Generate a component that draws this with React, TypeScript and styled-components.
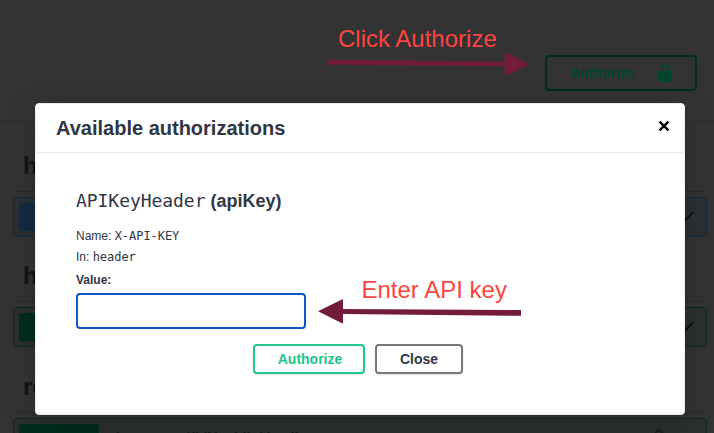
import React from "react";
import styled, { createGlobalStyle } from "styled-components";

const GlobalStyle = createGlobalStyle`
  *, *::before, *::after { box-sizing: border-box; }
  html, body { margin: 0; height: 100%; overflow: hidden; background: #333; }
  body { font-family: "Liberation Sans", Arial, sans-serif; color: #303645; }
  h1, h2, h3, h4, p { margin: 0; }
`;

const Page = styled.div`
  position: relative;
  width: 714px;
  height: 433px;
  overflow: hidden;
  background: #333;
`;

const SchemeBar = styled.header`
  height: 122px;
  padding: 55px 17px 0 0;
  display: flex;
  justify-content: flex-end;
  align-items: flex-start;
  border-bottom: 1px solid #2c2c2c;
`;

const AuthorizeTrigger = styled.button`
  width: 152px;
  height: 36px;
  padding: 0 20px 1px 23px;
  display: flex;
  align-items: center;
  justify-content: space-between;
  border: 2px solid #002f1f;
  border-radius: 4px;
  background: transparent;
  color: #00452d;
  font: bold 14px/1 "Liberation Sans", Arial, sans-serif;
`;

const Sections = styled.main`
  display: flex;
  flex-direction: column;
  padding: 19px 7px 0 13px;
`;

const Section = styled.section`
  height: 110px;
  flex: none;

  &:last-child {
    margin-top: 1px;
  }
`;

const TagTitle = styled.h3`
  height: 51px;
  padding: 11px 0 0 10px;
  border-bottom: 1px solid #292a2c;
  color: #11141b;
  font-size: 24px;
  line-height: 27px;
`;

const Operation = styled.div<{ $border: string; $bg: string }>`
  height: 40px;
  margin-top: 5px;
  padding: 0 10px 0 5px;
  display: flex;
  align-items: center;
  border: 1px solid ${(p) => p.$border};
  border-radius: 4px;
  background: ${(p) => p.$bg};
  color: #171a20;
`;

const Method = styled.span<{ $bg: string }>`
  width: 80px;
  height: 28px;
  border-radius: 3px;
  background: ${(p) => p.$bg};
  color: #27352f;
  font-size: 14px;
  font-weight: bold;
  line-height: 28px;
  text-align: center;
`;

const Path = styled.span`
  flex: 1;
  padding-left: 16px;
  color: #151719;
  font: bold 14px/20px "Liberation Sans", Arial, sans-serif;
`;

const RowIcons = styled.span`
  display: flex;
  align-items: center;
  gap: 9px;
`;

const Overlay = styled.div`
  position: absolute;
  inset: 0;
  padding: 103px 29px 18px 35px;
`;

const Dialog = styled.div`
  height: 312px;
  border-radius: 4px;
  background: #fff;
  border: 1px solid #ebebeb;
  box-shadow: 0 10px 30px rgba(0, 0, 0, 0.2);
`;

const DialogHeader = styled.div`
  height: 49px;
  padding: 0 14px 0 20px;
  display: flex;
  align-items: center;
  justify-content: space-between;
  border-bottom: 1px solid #ebebeb;
`;

const DialogTitle = styled.h2`
  font-size: 20px;
  line-height: 24px;
`;

const CloseIcon = styled.svg`
  margin-bottom: 4px;
`;

const DialogBody = styled.form`
  padding: 35px 40px 0;
  display: flex;
  flex-direction: column;
`;

const KeyTitle = styled.h4`
  height: 26px;
  font-size: 18px;
  line-height: 26px;
  white-space: pre;
`;

const Code = styled.code<{ $size: number }>`
  font-family: "DejaVu Sans Mono", monospace;
  font-size: ${(p) => p.$size}px;
  font-weight: 400;
  letter-spacing: -0.05px;
`;

const Detail = styled.p`
  height: 21px;
  font-size: 12px;
  line-height: 21px;
  white-space: pre;
`;

const Details = styled.div`
  padding-top: 12px;
`;

const ValueLabel = styled.label`
  margin-top: 2px;
  font-size: 12px;
  font-weight: bold;
  line-height: 20px;
`;

const ValueInput = styled.input`
  width: 230px;
  height: 36px;
  margin-top: 3px;
  padding: 0 10px;
  border: 2px solid #0b58bf;
  border-radius: 4px;
  background: #fff;
  outline: none;
`;

const Actions = styled.div`
  display: flex;
  gap: 10px;
  margin: 15px 0 0 177px;
`;

const ActionButton = styled.button<{ $width: number; $line: string; $ink: string; $nudge: number }>`
  width: ${(p) => p.$width}px;
  height: 30px;
  padding: 0 0 0 ${(p) => p.$nudge}px;
  border: 2px solid ${(p) => p.$line};
  border-radius: 4px;
  background: #fff;
  box-shadow: 0 1px 2px rgba(0, 0, 0, 0.12);
  color: ${(p) => p.$ink};
  font: bold 14px/1 "Liberation Sans", Arial, sans-serif;
`;

const Arrows = styled.svg`
  position: absolute;
  inset: 0;
`;

const Note = styled.span<{ $x: number; $y: number }>`
  position: absolute;
  left: ${(p) => p.$x}px;
  top: ${(p) => p.$y}px;
  color: #ff4341;
  font-size: 24px;
  line-height: 28px;
  white-space: nowrap;
`;

const UnlockIcon = ({ size, color }: { size: number; color: string }) => (
  <svg width={size} height={size} viewBox="0 0 20 20" fill={color}>
    <path d="M15.8 8H14V5.6C14 2.703 12.665 1 10 1 7.334 1 6 2.703 6 5.6V6h2v-.801C8 3.754 8.797 3 10 3c1.203 0 2 .754 2 2.199V8H4c-.553 0-1 .646-1 1.199V17c0 .549.428 1.139.951 1.307l1.197.387C5.672 18.861 6.55 19 7.1 19h5.8c.549 0 1.428-.139 1.951-.307l1.196-.387c.524-.167.953-.757.953-1.306V9.199C17 8.646 16.352 8 15.8 8z" />
  </svg>
);

const Check = () => (
  <svg width="18" height="14" viewBox="0 0 18 14" fill="none" stroke="#080909" strokeWidth="1.7">
    <path d="M0 3 7.500 10 15 2.500" />
  </svg>
);

const operations = [
  { tag: "h", method: "GET", path: "", line: "#142b43", row: "#2b3034", badge: "#142b43" },
  { tag: "h", method: "POST", path: "", line: "#002d1f", row: "#2b302f", badge: "#002d20" },
  { tag: "re", method: "POST", path: "/resources/{id}/public/details", line: "#002d1f", row: "#2b302f", badge: "#002d20" },
];

export default function App() {
  return (
    <Page>
      <GlobalStyle />
      <SchemeBar>
        <AuthorizeTrigger>
          Authorize
          <UnlockIcon size={20} color="#00452d" />
        </AuthorizeTrigger>
      </SchemeBar>
      <Sections>
        {operations.map((op, i) => (
          <Section key={i}>
            <TagTitle>{op.tag}</TagTitle>
            <Operation $border={op.line} $bg={op.row}>
              <Method $bg={op.badge}>{op.method}</Method>
              <Path>{op.path}</Path>
              <RowIcons>
                {i === 2 && <UnlockIcon size={20} color="#1b1e1d" />}
                <Check />
              </RowIcons>
            </Operation>
          </Section>
        ))}
      </Sections>

      <Overlay>
        <Dialog role="dialog">
          <DialogHeader>
            <DialogTitle>Available authorizations</DialogTitle>
            <CloseIcon width="12" height="12" viewBox="0 0 12 12" stroke="#000" strokeWidth="2.5" fill="none">
              <path d="M1.6 1.6 10.4 10.4M10.4 1.6 1.6 10.4" />
            </CloseIcon>
          </DialogHeader>
          <DialogBody>
            <KeyTitle>
              <Code $size={18}>APIKeyHeader</Code> (apiKey)
            </KeyTitle>
            <Details>
              <Detail>Name: <Code $size={12}>X-API-KEY</Code></Detail>
              <Detail>In: <Code $size={12}>header</Code></Detail>
            </Details>
            <ValueLabel htmlFor="value">Value:</ValueLabel>
            <ValueInput id="value" />
            <Actions>
              <ActionButton type="button" $width={112} $line="#20c68b" $ink="#20c68b" $nudge={2}>Authorize</ActionButton>
              <ActionButton type="button" $width={88} $line="#777" $ink="#303645" $nudge={0}>Close</ActionButton>
            </Actions>
          </DialogBody>
        </Dialog>
      </Overlay>

      <Arrows width="714" height="433" viewBox="0 0 714 433" fill="#731c3a">
        <path d="M327 59.700 504.500 61.800V51.500L529.500 64.300 504.500 76.500V66.300L327 64.600z" />
        <path d="M521 310 343 309V299L318 311.200 343 323.800V314L521 315.800z" />
      </Arrows>
      <Note $x={338} $y={25}>Click Authorize</Note>
      <Note $x={361.5} $y={276}>Enter API key</Note>
    </Page>
  );
}
